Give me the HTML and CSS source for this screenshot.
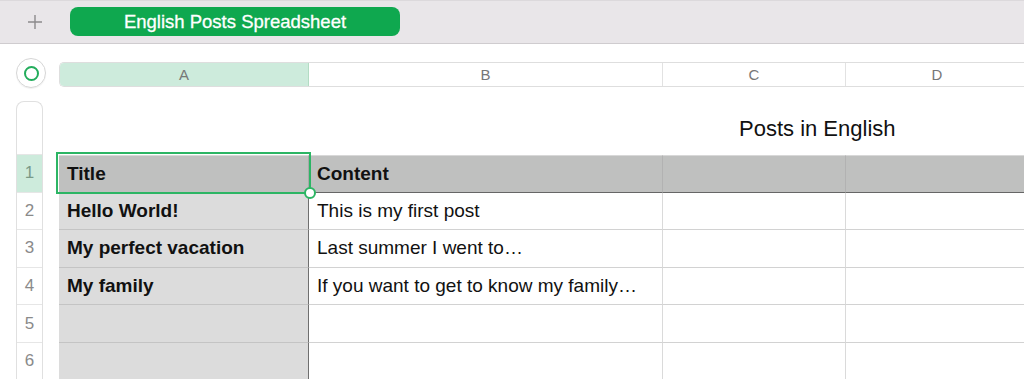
FILE: index.html
```html
<!DOCTYPE html>
<html lang="en">
<head>
    <meta charset="UTF-8">
    <meta name="viewport" content="width=device-width, initial-scale=1.0">
    <title>English Posts Spreadsheet</title>
    <link rel="stylesheet" href="styles.css">
</head>
<body>
    <div class="topbar">
        <button type="button" class="add-sheet">
            <svg width="16" height="16" viewBox="0 0 16 16"><path d="M8 1v14M1 8h14" stroke="#8c8a8c" stroke-width="1.4" fill="none"/></svg>
        </button>
        <div class="sheet-tab">English Posts Spreadsheet</div>
    </div>

    <div class="workspace">
        <div class="side">
            <div class="select-all"><span class="ring"></span></div>
            <div class="row-headers">
                <div class="row-head spacer"></div>
                <div class="row-head active">1</div>
                <div class="row-head">2</div>
                <div class="row-head">3</div>
                <div class="row-head">4</div>
                <div class="row-head">5</div>
                <div class="row-head">6</div>
            </div>
        </div>

        <div class="main">
            <div class="col-headers">
                <div class="col-head col-a active">A</div>
                <div class="col-head col-b">B</div>
                <div class="col-head col-c">C</div>
                <div class="col-head col-d">D</div>
            </div>

            <div class="table-title">Posts in English</div>

            <div class="grid">
                <!-- header row -->
                <div class="cell head key">Title</div>
                <div class="cell head">Content</div>
                <div class="cell head"></div>
                <div class="cell head"></div>

                <div class="cell key">Hello World!</div>
                <div class="cell">This is my first post</div>
                <div class="cell"></div>
                <div class="cell"></div>

                <div class="cell key">My perfect vacation</div>
                <div class="cell">Last summer I went to…</div>
                <div class="cell"></div>
                <div class="cell"></div>

                <div class="cell key">My family</div>
                <div class="cell">If you want to get to know my family…</div>
                <div class="cell"></div>
                <div class="cell"></div>

                <div class="cell key"></div>
                <div class="cell"></div>
                <div class="cell"></div>
                <div class="cell"></div>

                <div class="cell key"></div>
                <div class="cell"></div>
                <div class="cell"></div>
                <div class="cell"></div>

                <!-- selected cell A1 -->
                <div class="selection"><span class="handle"></span></div>
            </div>
        </div>
    </div>
</body>
</html>
```

FILE: styles.css
```css
body {
    font-family: "Liberation Sans", Arial, sans-serif;
    background-color: #fff;
    margin: 0;
    padding: 0;
    width: 1024px;
    height: 379px;
    overflow: hidden;
}

/* Sheet tabs bar */
.topbar {
    height: 44px;
    box-sizing: border-box;
    background-color: #e9e6e9;
    border-top: 1px solid #dcd9dc;
    border-bottom: 1px solid #cfcccf;
    display: flex;
    align-items: center;
}

.add-sheet {
    width: 70px;
    height: 30px;
    padding: 0;
    border: none;
    background: none;
    display: flex;
    align-items: center;
    justify-content: center;
    margin-top: -1px;
}

.sheet-tab {
    width: 330px;
    height: 29px;
    margin-top: -1px;
    background-color: #0fa84f;
    border-radius: 8px;
    color: #fff;
    font-size: 18.5px;
    -webkit-text-stroke: 0.3px #fff;
    display: flex;
    align-items: center;
    justify-content: center;
}

/* Sheet area */
.workspace {
    display: flex;
    gap: 13px;
    padding-left: 16px;
    height: 335px;
    overflow: hidden;
}

.side {
    width: 30px;
    flex-shrink: 0;
}

.select-all {
    width: 30px;
    height: 30px;
    margin-top: 14px;
    box-sizing: border-box;
    border: 1px solid #d6d6d6;
    border-radius: 50%;
    display: flex;
    align-items: center;
    justify-content: center;
    box-shadow: 0 1px 1px rgba(0, 0, 0, 0.06);
}

.ring {
    width: 15px;
    height: 15px;
    box-sizing: border-box;
    border: 2px solid #23ad5c;
    border-radius: 50%;
}

.row-headers {
    width: 27px;
    margin-top: 13px;
    box-sizing: border-box;
    border: 1px solid #e0e0e0;
    border-bottom: none;
    border-radius: 8px 8px 0 0;
}

.row-head {
    height: 37.6px;
    box-sizing: border-box;
    border-bottom: 1px solid #e6e6e6;
    color: #8a8a8a;
    font-size: 17px;
    display: flex;
    align-items: center;
    justify-content: center;
}

.row-head.spacer {
    height: 53px;
}

.row-head.active {
    background-color: #cdebdc;
    color: #7a9a88;
}

.main {
    flex: 1;
    min-width: 0;
}

.col-headers {
    display: flex;
    margin-top: 18px;
    height: 25px;
    box-sizing: border-box;
    border-top: 1px solid #dedede;
    border-bottom: 1px solid #dedede;
    border-left: 1px solid #dedede;
    border-radius: 5px 0 0 5px;
    overflow: hidden;
}

.col-head {
    box-sizing: border-box;
    border-right: 1px solid #e2e2e2;
    color: #777;
    font-size: 15px;
    display: flex;
    align-items: center;
    justify-content: center;
    flex-shrink: 0;
}

.col-head.active {
    background-color: #cdebdc;
    border-right-color: #b3dcc4;
}

.col-a { width: 249px; }
.col-b { width: 354px; }
.col-c { width: 183px; }
.col-d { width: 183px; }

.table-title {
    height: 68px;
    box-sizing: border-box;
    padding-top: 29px;
    padding-left: 680px;
    font-size: 22px;
    color: #111;
}

/* Table */
.grid {
    position: relative;
    display: grid;
    grid-template-columns: 250px 354px 183px 183px;
    grid-auto-rows: 37.6px;
}

.cell {
    box-sizing: border-box;
    border-right: 1px solid #dadada;
    border-bottom: 1px solid #d2d2d2;
    padding-left: 8px;
    font-size: 19px;
    color: #111;
    display: flex;
    align-items: center;
    white-space: nowrap;
}

.cell.key {
    background-color: #dcdcdc;
    font-weight: bold;
    border-right-color: #6f6f6f;
    border-bottom-color: #c4c4c4;
}

.cell.head {
    background-color: #bfc0bf;
    font-weight: bold;
    border-top: 1px solid #d8d8d8;
    border-right-color: #b2b2b2;
    border-bottom-color: #666;
}

.cell.head.key {
    border-right-color: #a8a8a8;
}

.selection {
    position: absolute;
    left: -3px;
    top: -3px;
    width: 255px;
    height: 42px;
    box-sizing: border-box;
    border: 2px solid #2cb564;
    pointer-events: none;
}

.handle {
    position: absolute;
    right: -7px;
    bottom: -7px;
    width: 12px;
    height: 12px;
    box-sizing: border-box;
    border: 2px solid #2cb564;
    border-radius: 50%;
    background-color: #fff;
}
```
